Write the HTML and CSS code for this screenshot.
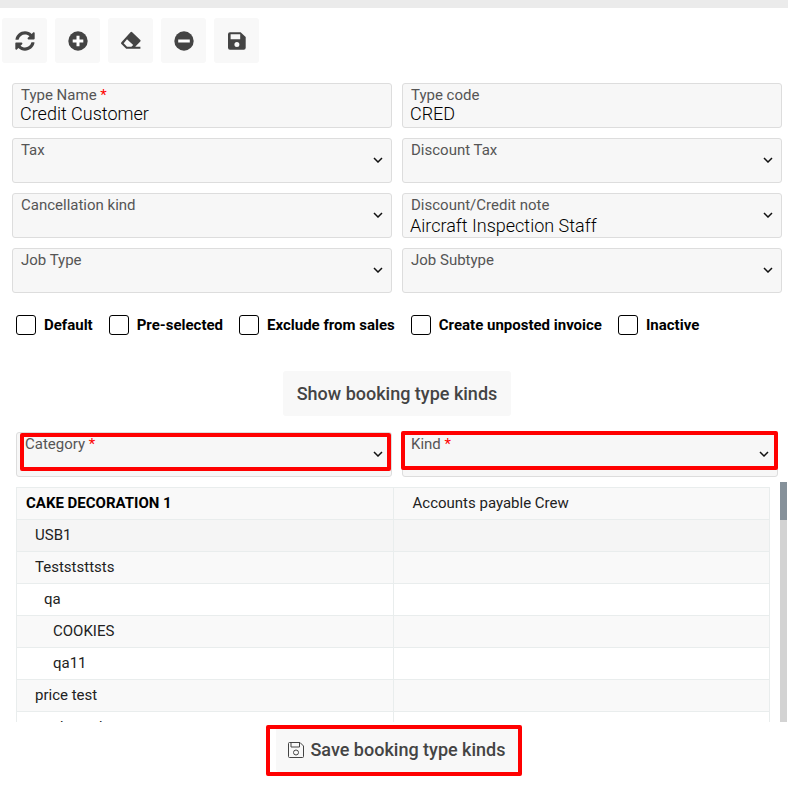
FILE: index.html
```html
<!DOCTYPE html>
<html lang="en">
<head>
    <meta charset="UTF-8">
    <meta name="viewport" content="width=device-width, initial-scale=1.0">
    <title>Booking type</title>
    <link rel="stylesheet" href="styles.css">
</head>
<body>
    <div class="top-bar"></div>

    <!-- Toolbar -->
    <div class="toolbar">
        <button type="button" class="btn-icon" aria-label="Refresh">
            <svg width="20" height="20" viewBox="0 0 512 512" fill="currentColor"><path d="M370.72 133.28C339.458 104.008 298.888 87.962 255.848 88c-77.458.068-144.328 53.178-162.791 126.85-1.344 5.363-6.122 9.15-11.651 9.15H24.103c-7.498 0-13.194-6.807-11.807-14.176C33.933 94.924 134.813 8 256 8c66.448 0 126.791 26.136 171.315 68.685L463.03 40.97C478.149 25.851 504 36.559 504 57.941V192c0 13.255-10.745 24-24 24H345.941c-21.382 0-32.09-25.851-16.971-40.971l41.75-41.749zM32 296h134.059c21.382 0 32.09 25.851 16.971 40.971l-41.75 41.75c31.262 29.273 71.835 45.319 114.876 45.28 77.418-.07 144.315-53.144 162.787-126.849 1.344-5.363 6.122-9.15 11.651-9.15h57.304c7.498 0 13.194 6.807 11.807 14.176C478.067 417.076 377.187 504 256 504c-66.448 0-126.791-26.136-171.315-68.685L48.97 471.03C33.851 486.149 8 475.441 8 454.059V320c0-13.255 10.745-24 24-24z"/></svg>
        </button>
        <button type="button" class="btn-icon" aria-label="Add">
            <svg width="20" height="20" viewBox="0 0 20 20"><circle cx="10" cy="10" r="9.7" fill="currentColor"/><path d="M10 4.7v10.6M4.7 10h10.6" stroke="#fff" stroke-width="3"/></svg>
        </button>
        <button type="button" class="btn-icon" aria-label="Clear">
            <svg width="22" height="20" viewBox="0 0 22 20"><path d="M12.2 1.2 20.3 9a1 1 0 0 1 0 1.4l-5.1 5.4h5.2v2H6.2L1.4 13a1.3 1.3 0 0 1 0-1.8L10.5 1.2a1.2 1.2 0 0 1 1.7 0z" fill="currentColor"/><path d="M7 8.2 13.2 14l-1.8 1.8H7L3.7 12.2z" fill="#f8f8f8"/></svg>
        </button>
        <button type="button" class="btn-icon" aria-label="Remove">
            <svg width="20" height="20" viewBox="0 0 20 20"><circle cx="10" cy="10" r="9.7" fill="currentColor"/><path d="M4.2 10h11.6" stroke="#fff" stroke-width="3"/></svg>
        </button>
        <button type="button" class="btn-icon" aria-label="Save">
            <svg width="20" height="20" viewBox="0 0 20 20"><path fill="currentColor" fill-rule="evenodd" d="M3 1.3h10.600L18.700 6v10.800a2 2 0 0 1-2 2H3a2 2 0 0 1-2-2V3.300a2 2 0 0 1 2-2zM3.600 3.300v5h9.600v-5zM9.900 11a2.500 2.500 0 1 0 0 5 2.500 2.500 0 0 0 0-5z"/></svg>
        </button>
    </div>

    <form>
        <div class="fields">
            <div class="field">
                <label for="typeName">Type Name <span class="required">*</span></label>
                <input type="text" id="typeName" value="Credit Customer">
            </div>
            <div class="field">
                <label for="typeCode">Type code</label>
                <input type="text" id="typeCode" value="CRED">
            </div>
            <div class="field">
                <label for="tax">Tax</label>
                <select id="tax"><option></option></select>
                <svg class="chevron" viewBox="0 0 10 6"><path d="M1 1l4 4 4-4"/></svg>
            </div>
            <div class="field">
                <label for="discountTax">Discount Tax</label>
                <select id="discountTax"><option></option></select>
                <svg class="chevron" viewBox="0 0 10 6"><path d="M1 1l4 4 4-4"/></svg>
            </div>
            <div class="field">
                <label for="cancellation">Cancellation kind</label>
                <select id="cancellation"><option></option></select>
                <svg class="chevron" viewBox="0 0 10 6"><path d="M1 1l4 4 4-4"/></svg>
            </div>
            <div class="field">
                <label for="creditNote">Discount/Credit note</label>
                <select id="creditNote"><option>Aircraft Inspection Staff</option></select>
                <svg class="chevron" viewBox="0 0 10 6"><path d="M1 1l4 4 4-4"/></svg>
            </div>
            <div class="field">
                <label for="jobType">Job Type</label>
                <select id="jobType"><option></option></select>
                <svg class="chevron" viewBox="0 0 10 6"><path d="M1 1l4 4 4-4"/></svg>
            </div>
            <div class="field">
                <label for="jobSubtype">Job Subtype</label>
                <select id="jobSubtype"><option></option></select>
                <svg class="chevron" viewBox="0 0 10 6"><path d="M1 1l4 4 4-4"/></svg>
            </div>
        </div>

        <div class="checks">
            <label class="check"><input type="checkbox"> Default</label>
            <label class="check"><input type="checkbox"> Pre-selected</label>
            <label class="check"><input type="checkbox"> Exclude from sales</label>
            <label class="check"><input type="checkbox"> Create unposted invoice</label>
            <label class="check"><input type="checkbox"> Inactive</label>
        </div>

        <div class="actions">
            <button type="button" class="btn">Show booking type kinds</button>
        </div>

        <!-- Category and kind -->
        <div class="fields fields-kind">
            <div class="field">
                <label for="category">Category <span class="required">*</span></label>
                <select id="category"><option></option></select>
                <svg class="chevron" viewBox="0 0 10 6"><path d="M1 1l4 4 4-4"/></svg>
                <div class="mark mark-category"></div>
            </div>
            <div class="field">
                <label for="kind">Kind <span class="required">*</span></label>
                <select id="kind"><option></option></select>
                <svg class="chevron" viewBox="0 0 10 6"><path d="M1 1l4 4 4-4"/></svg>
                <div class="mark mark-kind"></div>
            </div>
        </div>

        <div class="kinds">
            <div class="kinds-list">
                <table>
                    <tbody>
                        <tr><td class="root">CAKE DECORATION 1</td><td>Accounts payable Crew</td></tr>
                        <tr class="active"><td class="level-1">USB1</td><td></td></tr>
                        <tr><td class="level-1">Testststtsts</td><td></td></tr>
                        <tr><td class="level-2">qa</td><td></td></tr>
                        <tr><td class="level-3">COOKIES</td><td></td></tr>
                        <tr><td class="level-3">qa11</td><td></td></tr>
                        <tr><td class="level-1">price test</td><td></td></tr>
                        <tr><td class="level-2">sub product</td><td></td></tr>
                    </tbody>
                </table>
            </div>
            <div class="scrollbar"><div class="thumb"></div></div>
        </div>

        <div class="actions actions-save">
            <button type="submit" class="btn btn-save">
                <svg width="16" height="16" viewBox="0 0 16 16" fill="none" stroke="currentColor"><path d="M1.500.5h10.500l3.500 3.500v10.500a1 1 0 0 1-1 1h-13a1 1 0 0 1-1-1v-13a1 1 0 0 1 1-1zM3 .5v4.500h8.500V.5"/><circle cx="8" cy="10.500" r="2.500"/></svg>
                Save booking type kinds
                <span class="mark mark-save"></span>
            </button>
        </div>
    </form>
</body>
</html>
```
FILE: styles.css
```css
* {
    box-sizing: border-box;
}

body {
    font-family: Roboto, sans-serif;
    font-size: 15px;
    margin: 0;
    background-color: #fff;
    color: #222;
}

.top-bar {
    height: 8px;
    background-color: #ebebeb;
}

/* Toolbar */
.toolbar {
    display: flex;
    gap: 8px;
    padding: 10px 2px 20px;
}

.btn-icon {
    display: flex;
    align-items: center;
    justify-content: center;
    width: 45px;
    height: 45px;
    padding: 0;
    border: none;
    border-radius: 3px;
    background-color: #f8f8f8;
    color: #444;
    cursor: pointer;
}

/* Form fields */
.fields {
    display: grid;
    grid-template-columns: 1fr 1fr;
    gap: 10px;
    padding: 0 6px 0 12px;
}

.fields-kind {
    padding: 0 10px 0 16px;
}

.field {
    position: relative;
    display: flex;
    flex-direction: column;
    height: 45px;
    padding: 2px 7px 0;
    border: 1px solid #ddd;
    border-radius: 3px;
    background-color: #f7f7f7;
}

.field label {
    padding-left: 1px;
    line-height: 18px;
    color: #555;
}

.required {
    color: #f00;
}

.field input,
.field select {
    width: 100%;
    height: 18px;
    padding: 0;
    border: none;
    background: none;
    font-family: inherit;
    font-size: 18px;
    font-weight: 300;
    color: #000;
    appearance: none;
    outline: none;
}

.field select {
    height: 24px;
}

.chevron {
    position: absolute;
    top: 18px;
    right: 8px;
    width: 10px;
    height: 6px;
    fill: none;
    stroke: #111;
    stroke-width: 1.5;
    pointer-events: none;
}

/* Checkboxes */
.checks {
    display: flex;
    flex-wrap: wrap;
    gap: 16px;
    padding: 22px 16px 36px;
}

.check {
    display: flex;
    align-items: center;
    gap: 8px;
    line-height: 20px;
    font-weight: bold;
    color: #000;
}

.check input {
    width: 20px;
    height: 20px;
    margin: 0;
    border: 1px solid #000;
    border-radius: 3px;
    background-color: #fff;
    appearance: none;
}

/* Buttons */
.actions {
    display: flex;
    justify-content: center;
    padding: 0 6px 16px 12px;
}

.btn {
    position: relative;
    display: flex;
    align-items: center;
    gap: 6px;
    height: 45px;
    padding: 0 14px;
    border: none;
    border-radius: 3px;
    background-color: #f8f8f8;
    color: #444;
    font-family: inherit;
    font-size: 18px;
    font-weight: 500;
    cursor: pointer;
}

.actions-save {
    padding-top: 5px;
}

.btn-save {
    padding: 0 12px;
}

/* Red highlight frames */
.mark {
    position: absolute;
    border: 4px solid #f00;
    border-radius: 2px;
    pointer-events: none;
}

.mark-category {
    inset: 0 0 5px 3px;
}

.mark-kind {
    inset: -2px -1px 6px -2px;
}

.mark-save {
    inset: -2px -4px -4px -10px;
}

/* Kinds table */
.kinds {
    display: flex;
    justify-content: space-between;
    gap: 10px;
    height: 240px;
    margin-top: 5px;
    padding: 0 1px 0 16px;
}

.kinds-list {
    flex: 1;
    padding-top: 5px;
    overflow: hidden;
}

.scrollbar {
    width: 7px;
    background-color: #d3d3d3;
}

.thumb {
    height: 38px;
    background-color: #86919a;
}

table {
    width: 100%;
    border-collapse: collapse;
    table-layout: fixed;
}

td {
    height: 32px;
    padding: 0 19px 2px;
    border: 1px solid #e9eded;
    line-height: 20px;
}

tr:nth-child(odd) {
    background-color: #f9f9f9;
}

tr.active {
    background-color: #f5f5f5;
}

.root {
    padding-left: 9px;
    font-weight: bold;
    color: #000;
}

.level-1 {
    padding-left: 18px;
}

.level-2 {
    padding-left: 27px;
}

.level-3 {
    padding-left: 36px;
}
```
